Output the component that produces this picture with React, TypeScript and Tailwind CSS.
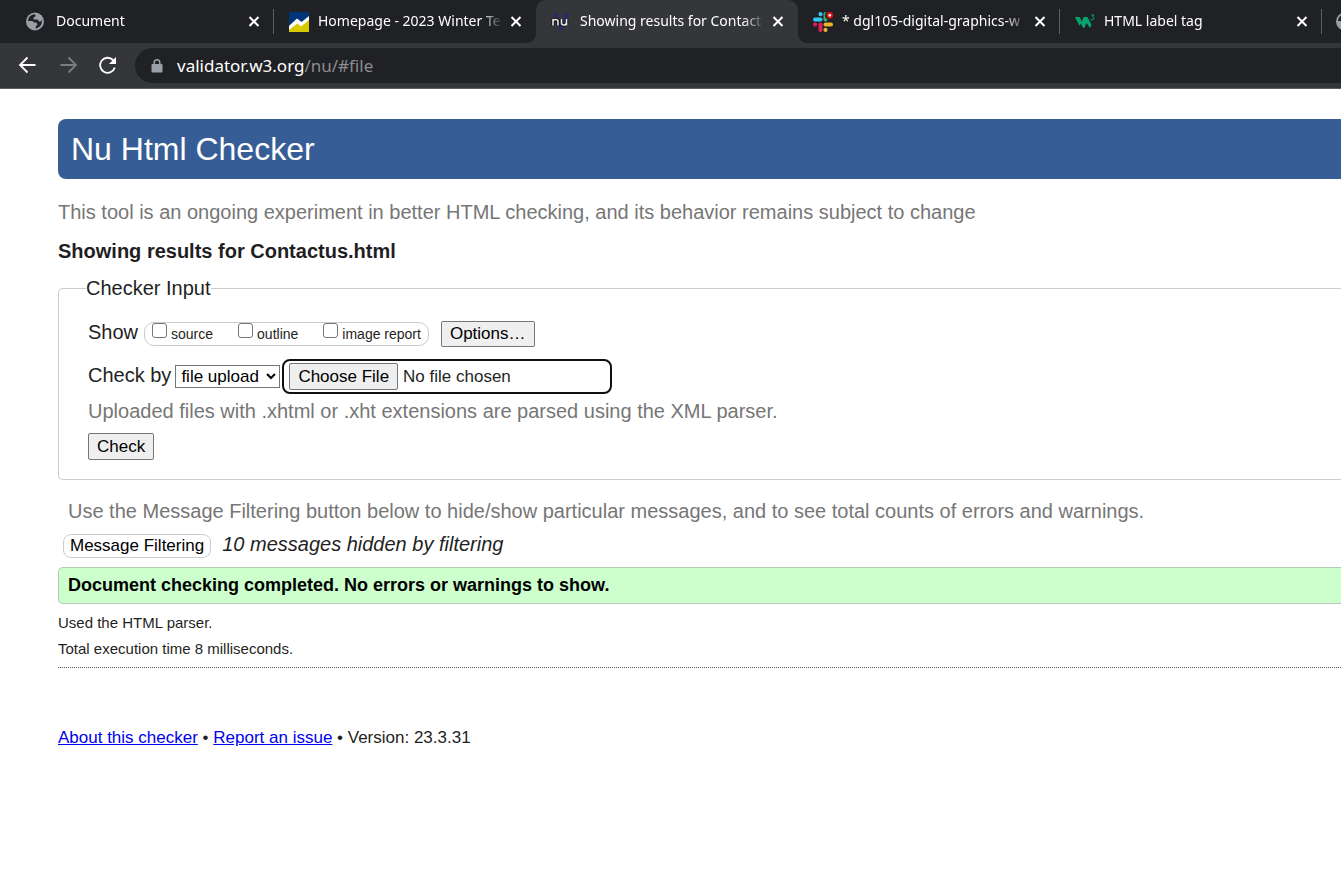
import type { ReactNode } from "react";

function GlobeIcon() {
  return (
    <svg viewBox="0 0 20 20" className="-ml-px size-5" aria-hidden="true">
      <circle cx="9" cy="9.500" r="9" fill="#9aa0a6" />
      <path d="M2 9c.3-3.500 3-6.500 6.500-6.700L10 4 7.500 5.500v2h4l1.500 2h2l1-2c.5 5-2.500 8.500-6.500 9l.5-2.500 1.500-1.500-1-2H8L6.500 9z" fill="#202124" />
      <path d="M5 11.500l2.500 1v3.500C5 15.300 3.500 14 2.600 11.500z" fill="#9aa0a6" />
    </svg>
  );
}

function CollegeIcon() {
  return (
    <svg viewBox="0 0 20 20" className="size-5" aria-hidden="true">
      <path d="M0 0h20v20H0z" fill="#d8c800" />
      <path d="M0 0h20v6L14 12 8 7 0 14z" fill="#003478" />
      <path d="M0 14 8 6.500 12.500 10 20 4v4l-8 6.500L8.500 11.500 0 18z" fill="#fff" />
    </svg>
  );
}

function NuIcon() {
  return (
    <svg viewBox="0 0 20 20" className="size-5" aria-hidden="true">
      <path d="M2 1h4l4 10 4-10h4l-7 18H9z" fill="#2b2968" />
      <path
        d="M2 13.500V7M2 9.500Q2 7.500 4.500 7.500T7 9.500V13.500M10.500 7v4Q10.500 13 12.800 13T15.500 11V7M15.500 11v2.500"
        fill="none"
        stroke="#16161a"
        strokeWidth="3.500"
      />
      <path
        d="M2 13.500V7M2 9.500Q2 7.500 4.500 7.500T7 9.500V13.500M10.500 7v4Q10.500 13 12.800 13T15.500 11V7M15.500 11v2.500"
        fill="none"
        stroke="#e4e4e4"
        strokeWidth="1.600"
      />
    </svg>
  );
}

function SlackIcon() {
  return (
    <svg viewBox="0 0 20 20" className="size-5" aria-hidden="true">
      <g strokeWidth="4" strokeLinecap="round" fill="none">
        <path d="M2 7.500h5.500" stroke="#36c5f0" />
        <path d="M7.500 2v.2" stroke="#36c5f0" />
        <path d="M12.500 2v5.500" stroke="#2eb67d" />
        <path d="M12.500 12.500H18" stroke="#ecb22e" />
        <path d="M12.500 18v-.2" stroke="#ecb22e" />
        <path d="M7.500 12.500V18" stroke="#e01e5a" />
        <path d="M2 12.500h.2" stroke="#e01e5a" />
      </g>
      <circle cx="16.500" cy="3.500" r="4.600" fill="#202124" />
      <circle cx="16.800" cy="3.300" r="2.400" fill="#fff" stroke="#e01010" strokeWidth="2" />
    </svg>
  );
}

function SchoolsIcon() {
  return (
    <svg viewBox="0 0 20 20" className="size-5" aria-hidden="true">
      <path d="M0 5h4.500l2.500 4.500L8.500 5h4l4 8-1.500 3-3.500-5-2 5H8.500L5.500 11.500 4.500 14z" fill="#04a46c" />
      <path d="M16 3h3l-1.500 1.800q1.500.2 1.500 1.500T17.200 7.800 15.800 7" fill="none" stroke="#04a46c" />
    </svg>
  );
}

function CloseIcon() {
  return (
    <svg viewBox="0 0 18 18" className="size-[18px]" fill="none" stroke="currentColor" strokeWidth="2" aria-hidden="true">
      <path d="M4.500 4l9 9M13.500 4l-9 9" />
    </svg>
  );
}

function ArrowIcon({ flipped }: { flipped?: boolean }) {
  return (
    <svg
      viewBox="0 0 24 24"
      className={flipped ? "size-6 -scale-x-100" : "size-6"}
      fill="none"
      stroke="currentColor"
      strokeWidth="1.800"
      aria-hidden="true"
    >
      <path d="M19.500 11H4.500M11.500 3.500 4 11l7.500 7.500" />
    </svg>
  );
}

function ReloadIcon() {
  return (
    <svg viewBox="0 0 24 24" className="size-6" aria-hidden="true">
      <path d="M18.800 13.500A7.500 7.500 0 1 1 17 6L18.500 7.500" fill="none" stroke="currentColor" strokeWidth="1.800" />
      <path d="M20 3v7h-7z" fill="currentColor" />
    </svg>
  );
}

function LockIcon() {
  return (
    <svg viewBox="0 0 16 16" className="mr-3 size-4 text-[#9aa0a6]" aria-hidden="true">
      <path d="M5.200 7V4.500a2.800 2.800 0 0 1 5.600 0V7" fill="none" stroke="currentColor" strokeWidth="1.500" />
      <rect x="2.500" y="6" width="11" height="8.500" rx="1.200" fill="currentColor" />
    </svg>
  );
}

type TabData = { title: string; icon: ReactNode; active?: boolean; divider?: boolean };

const tabs: TabData[] = [
  { title: "Document", icon: <GlobeIcon />, divider: true },
  { title: "Homepage - 2023 Winter Te", icon: <CollegeIcon /> },
  { title: "Showing results for Contact", icon: <NuIcon />, active: true },
  { title: "* dgl105-digital-graphics-w", icon: <SlackIcon />, divider: true },
  { title: "HTML label tag", icon: <SchoolsIcon />, divider: true },
  { title: "", icon: <GlobeIcon /> },
];

function Tab({ title, icon, active, divider }: TabData) {
  return (
    <div
      className={
        "relative flex h-full w-[262px] shrink-0 items-center pl-[15px] pr-[11px] " +
        (active ? "rounded-t-[10px] bg-[#35363a]" : "")
      }
    >
      {active && (
        <>
          <svg viewBox="0 0 9 9" className="absolute bottom-0 -left-[9px] size-[9px]" aria-hidden="true">
            <path d="M9 0v9H0A9 9 0 0 0 9 0z" fill="#35363a" />
          </svg>
          <svg viewBox="0 0 9 9" className="absolute bottom-0 -right-[9px] size-[9px]" aria-hidden="true">
            <path d="M0 0v9h9A9 9 0 0 1 0 0z" fill="#35363a" />
          </svg>
        </>
      )}
      <span className="flex w-[29px] shrink-0">{icon}</span>
      <span className="mb-[2px] min-w-0 flex-1 overflow-hidden whitespace-nowrap mask-r-from-88% mask-r-to-100% text-sm leading-5 text-white">
        {title}
      </span>
      <button type="button" aria-label="Close tab" className="ml-1 flex shrink-0 text-white">
        <CloseIcon />
      </button>
      {divider && <span className="absolute right-0 h-[25px] w-px bg-[#5f6064]" />}
    </div>
  );
}

function Browser() {
  return (
    <header className="font-['Noto_Sans','Open_Sans',sans-serif]">
      <div className="flex h-[43px] overflow-hidden bg-[#202124] pl-3">
        {tabs.map((tab) => (
          <Tab key={tab.title} {...tab} />
        ))}
      </div>
      <div className="flex h-[46px] items-center border-b border-[#5c5d60] bg-[#35363a] pl-4">
        <button type="button" aria-label="Back" className="flex w-10 text-white">
          <ArrowIcon />
        </button>
        <button type="button" aria-label="Forward" className="flex w-10 text-[#7c7d80]">
          <ArrowIcon flipped />
        </button>
        <button type="button" aria-label="Reload" className="flex w-[39px] text-white">
          <ReloadIcon />
        </button>
        <div className="flex h-[35px] flex-1 items-center rounded-l-full bg-[#202124] pl-[14px]">
          <LockIcon />
          <span className="text-[17px] leading-6 text-[#8b8d91]">
            <span className="text-white">validator.w3.org</span>/nu/#file
          </span>
        </div>
      </div>
    </header>
  );
}

function ShowOption({ id, label }: { id: string; label: string }) {
  return (
    <span className="flex items-center gap-1">
      <input
        id={id}
        type="checkbox"
        className="mb-2 size-[15px] appearance-none rounded-[3px] border border-[#767676] bg-white checked:bg-[#0075ff]"
      />
      <label htmlFor={id} className="text-sm">
        {label}
      </label>
    </span>
  );
}

const buttonClass = "rounded-[2px] border border-[#767676] bg-[#efefef] px-2 text-[17px] text-black";

export default function App() {
  return (
    <div className="min-h-screen overflow-hidden bg-white font-['Liberation_Sans',Arial,sans-serif] text-xl leading-[26px] text-[#1f1f23]">
      <Browser />
      <main className="pt-[30px] pl-[58px]">
        <h1 className="rounded-l-lg bg-[#365d95] px-[13px] text-[32px] leading-[60px] text-white">Nu Html Checker</h1>
        <p className="mt-5 text-[#767676]">
          This tool is an ongoing experiment in better HTML checking, and its behavior remains subject to change
        </p>
        <h2 className="mt-[13px] font-bold">Showing results for Contactus.html</h2>

        <form onSubmit={(event) => event.preventDefault()}>
          <fieldset className="mt-3 rounded-l-[5px] border border-r-0 border-[#ccc] pb-[19px] pl-[29px]">
            <legend className="-ml-[2px] leading-6">Checker Input</legend>
            <div className="mt-[21px] flex items-start">
              <span className="leading-[22px]">Show</span>
              <div className="mt-px ml-[6px] flex h-6 items-center gap-[25px] rounded-[10px] border border-[#ccc] px-[7px]">
                <ShowOption id="source" label="source" />
                <ShowOption id="outline" label="outline" />
                <ShowOption id="image-report" label="image report" />
              </div>
              <button type="button" className={buttonClass + " ml-3 leading-6"}>
                Options…
              </button>
            </div>
            <div className="mt-3 flex items-center">
              <label htmlFor="check-by" className="self-start leading-[33px]">
                Check by
              </label>
              <select
                id="check-by"
                className="ml-1 h-[23px] w-[105px] border border-[#767676] bg-white pl-px text-[17px] leading-5 text-black"
              >
                <option>file upload</option>
                <option>address</option>
                <option>text input</option>
              </select>
              <input
                type="file"
                aria-label="File to check"
                className="ml-[2px] h-[35px] w-[330px] rounded-lg border-2 border-[#101010] px-[5px] py-[2px] text-[17px] leading-[25px] file:mr-[5px] file:rounded-[2px] file:border file:border-solid file:border-[#767676] file:bg-[#efefef] file:px-2 file:text-black"
              />
            </div>
            <p className="mt-1 text-[#767676]">
              Uploaded files with .xhtml or .xht extensions are parsed using the XML parser.
            </p>
            <button type="submit" className={buttonClass + " mt-[9px] block leading-[25px]"}>
              Check
            </button>
          </fieldset>
        </form>

        <section>
          <p className="mt-[18px] pl-[10px] text-[#767676]">
            Use the Message Filtering button below to hide/show particular messages, and to see total counts of errors
            and warnings.
          </p>
          <div className="mt-[7px] flex items-baseline gap-[11px] pl-[5px]">
            <button
              type="button"
              className="rounded-lg border border-[#ccc] bg-white px-[6px] text-[17px] leading-[22px] text-black"
            >
              Message Filtering
            </button>
            <span className="italic">10 messages hidden by filtering</span>
          </div>
          <p className="mt-[9px] rounded-l-[5px] border border-r-0 border-[#b4ccb4] bg-[#cfc] pl-[9px] text-lg leading-[35px] font-bold text-black">
            Document checking completed. No errors or warnings to show.
          </p>
          <div className="mt-[6px] border-b border-dotted border-[#555] pb-[5px] text-[15px] leading-[26px]">
            <p>Used the HTML parser.</p>
            <p>Total execution time 8 milliseconds.</p>
          </div>
        </section>

        <footer className="mt-[57px] text-[17px] leading-[26px]">
          <a href="#about" className="text-[#0000ee] underline">
            About this checker
          </a>{" "}
          •{" "}
          <a href="#issue" className="text-[#0000ee] underline">
            Report an issue
          </a>{" "}
          • Version: 23.3.31
        </footer>
      </main>
    </div>
  );
}
